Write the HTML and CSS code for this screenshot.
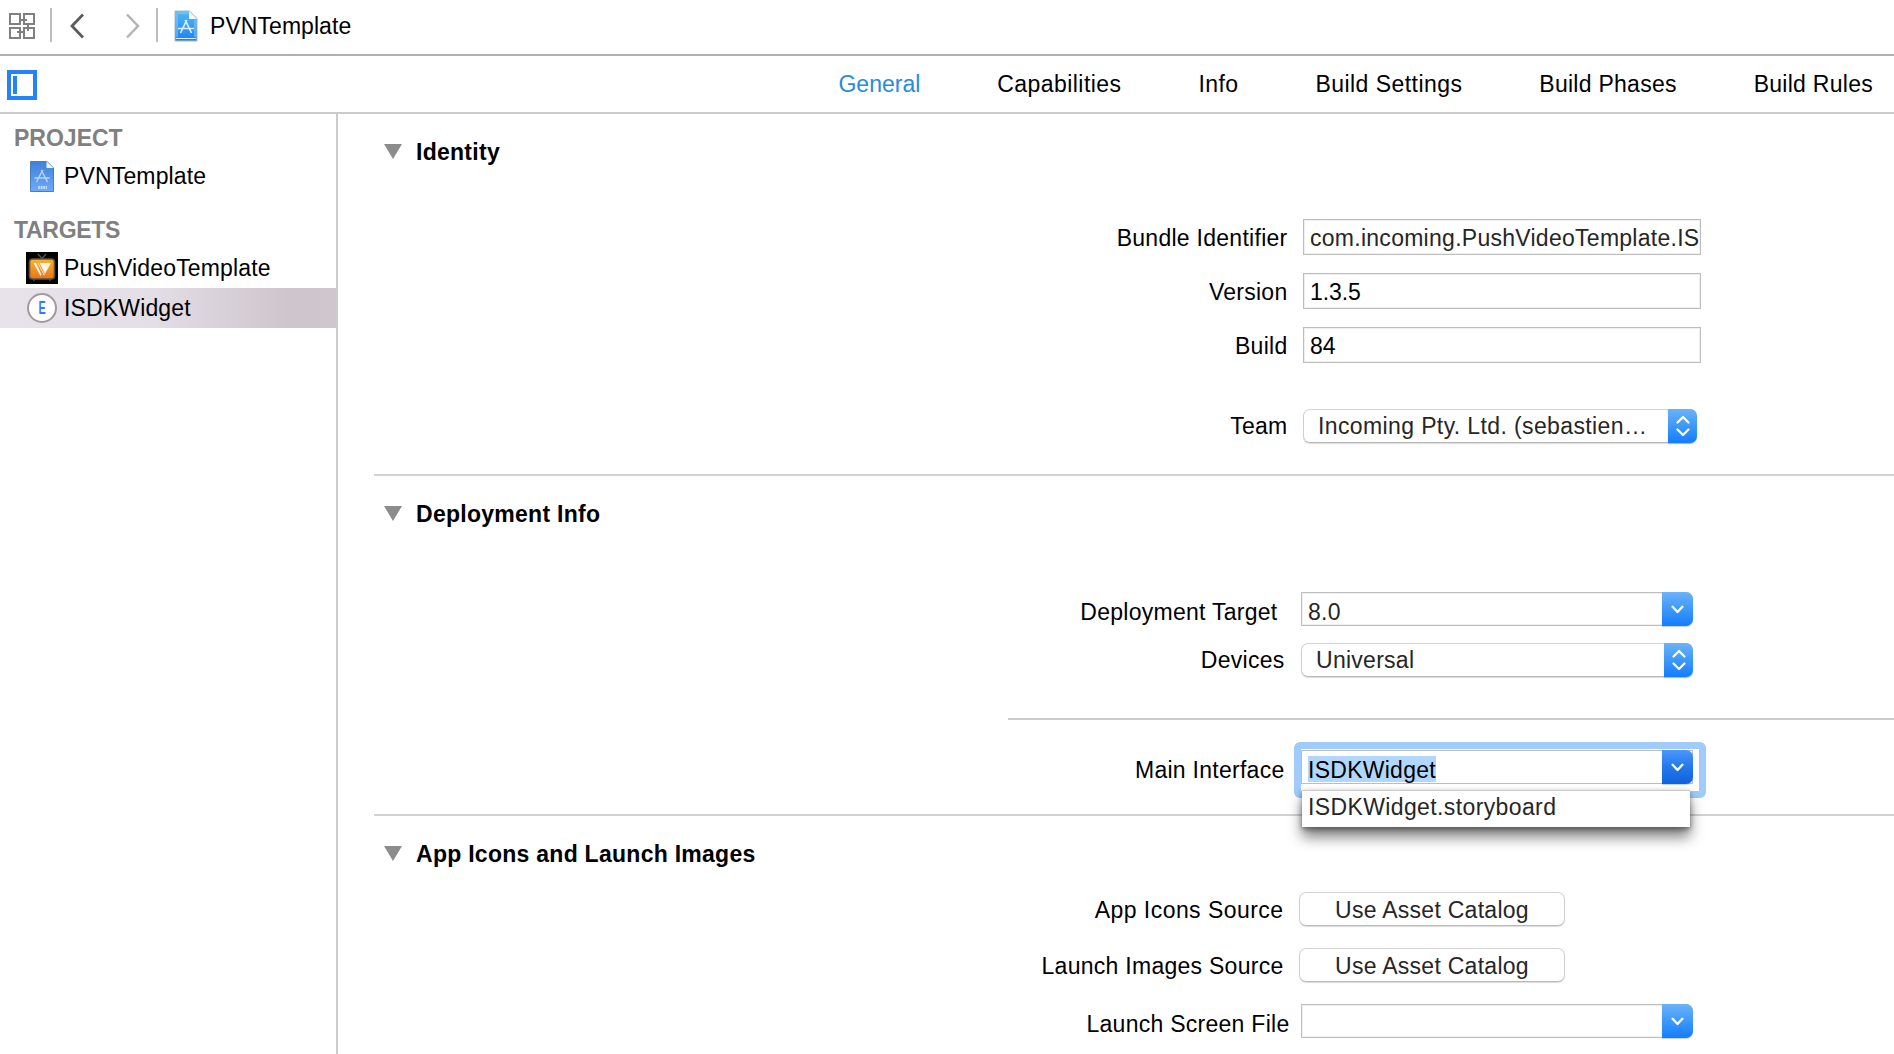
FILE: index.html
```html
<!DOCTYPE html>
<html lang="en">
<head>
<meta charset="utf-8">
<title>PVNTemplate</title>
<link rel="stylesheet" href="styles.css">
</head>
<body>
<svg width="0" height="0" class="defs">
  <defs>
    <linearGradient id="doc" x1="0" y1="0" x2="0" y2="1"><stop offset="0" stop-color="#54b8f4"/><stop offset="1" stop-color="#1c80f8"/></linearGradient>
    <linearGradient id="proj" x1="0" y1="0" x2="0" y2="1"><stop offset="0" stop-color="#3f80da"/><stop offset="1" stop-color="#70aaf8"/></linearGradient>
    <linearGradient id="tv" x1="0" y1="0" x2="0" y2="1"><stop offset="0" stop-color="#f9b52c"/><stop offset="1" stop-color="#e8741c"/></linearGradient>
    <symbol id="down" viewBox="0 0 12 8"><path d="M1.5 1.5 6 6.3 10.5 1.5" fill="none" stroke="#fff" stroke-width="2.2" stroke-linecap="round" stroke-linejoin="round"/></symbol>
    <symbol id="updown" viewBox="0 0 14 22"><path d="M1.5 7.5 7 2 12.500 7.500M1.500 14.500 7 20 12.500 14.500" fill="none" stroke="#fff" stroke-width="2.2" stroke-linecap="round" stroke-linejoin="round"/></symbol>
    <symbol id="tri" viewBox="0 0 18 15"><path d="M0 0H18L9 15Z" fill="#8c8c8c"/></symbol>
  </defs>
</svg>

<header class="toolbar">
  <svg class="related" width="26" height="26" viewBox="0 0 26 26" fill="none" stroke="#808080" stroke-width="2"><path d="M1 1H11V11H1ZM15 1H25V11H15ZM1 15H11V25H1ZM15 15H25V25H15ZM11 7H18M19 11V18M8 19H15"/></svg>
  <i class="rule"></i>
  <svg class="back" width="14" height="26" viewBox="0 0 14 26" fill="none" stroke="#5c5c5c" stroke-width="2.8"><path d="M13 1.500 2 13 13 24.500"/></svg>
  <svg class="forward" width="14" height="26" viewBox="0 0 14 26" fill="none" stroke="#b4b4b4" stroke-width="2.5"><path d="M1 1.500 12 13 1 24.500"/></svg>
  <i class="rule"></i>
  <svg class="file" width="24" height="32" viewBox="0 0 24 32"><path d="M1 1H15.500L23 8.500V31H1Z" fill="url(#doc)" stroke="#a9bccb"/><path d="M3 27V3H14.500M21 9.500V27" fill="none" stroke="#8accf7"/><path d="M2 28.500H22" stroke="#d8edff"/><path d="M15 1 23 9H15Z" fill="#f2f7fb"/><path d="M6.500 23 12.800 10M11.200 10 17.500 23M4 18.500H20" fill="none" stroke="#d9efff" stroke-width="1.700"/></svg>
  <span>PVNTemplate</span>
</header>

<nav class="tabs">
  <svg class="toggle" width="30" height="30" viewBox="0 0 30 30"><path d="M2 2H28V28H2Z" fill="none" stroke="#2383fa" stroke-width="4"/><path d="M6 6H10V24H6Z" fill="#2383fa"/></svg>
  <span class="active">General</span>
  <span class="loose">Capabilities</span>
  <span class="loose">Info</span>
  <span class="loose">Build Settings</span>
  <span>Build Phases</span>
  <span>Build Rules</span>
</nav>

<div class="body">
  <aside class="sidebar">
    <h2>PROJECT</h2>
    <div class="item">
      <svg class="project-icon" width="24" height="31" viewBox="0 0 24 31"><path d="M.5.5H17L23.500 7V30.500H.5Z" fill="url(#proj)" stroke="#4a7dbd"/><path d="M16.500.500V7H23.500Z" fill="#eef3f8"/><path d="M6.500 21 12.800 9M11.200 9 17.500 21M4.500 17H19.500" fill="none" stroke="#b5d5fa" stroke-width="1.500"/><path d="M8 26.500H17" stroke="#b9d8fc" stroke-width="3" stroke-dasharray="2 .600"/></svg>
      <span class="name">PVNTemplate</span>
    </div>
    <h2 class="targets">TARGETS</h2>
    <div class="item">
      <svg class="app-icon" width="32" height="32" viewBox="0 0 32 32"><path d="M0 0H32V32H0Z" fill="#000"/><path d="M12 2 16 6.500 20 2M8 27V29M24 27V29" fill="none" stroke="#555" stroke-width="1.400"/><rect x="3.500" y="7" width="25" height="20" rx="3" fill="url(#tv)" stroke="#5b5148" stroke-width="1.600"/><path d="M7.500 11H10L15.500 22.500 14.500 24ZM11.500 11H25L18 23.500Z" fill="#fff5e6"/><path d="M13 11 18.500 22" stroke="#e98c25" stroke-width="1"/></svg>
      <span class="name">PushVideoTemplate</span>
    </div>
    <div class="item selected">
      <b class="ext"><i>E</i></b>
      <span class="name">ISDKWidget</span>
    </div>
  </aside>

  <main>
    <section class="identity">
      <h3><svg width="18" height="15"><use href="#tri"/></svg>Identity</h3>
      <div class="row"><label>Bundle Identifier</label><div class="field"><span>com.incoming.PushVideoTemplate.IS</span></div></div>
      <div class="row"><label>Version</label><div class="field dark tight">1.3.5</div></div>
      <div class="row"><label>Build</label><div class="field dark tight">84</div></div>
      <div class="row team"><label>Team</label><div class="popup">Incoming Pty. Ltd. (sebastien…<i class="knob"><svg width="14" height="22"><use href="#updown"/></svg></i></div></div>
    </section>

    <section class="deployment">
      <h3><svg width="18" height="15"><use href="#tri"/></svg>Deployment Info</h3>
      <div class="row target"><label>Deployment Target</label><div class="combo">8.0<i class="knob"><svg width="13" height="9"><use href="#down"/></svg></i></div></div>
      <div class="row devices"><label>Devices</label><div class="popup">Universal<i class="knob"><svg width="14" height="22"><use href="#updown"/></svg></i></div></div>
      <hr>
      <div class="row interface">
        <label>Main Interface</label>
        <div class="combo focused"><mark>ISDKWidget</mark><i class="knob"><svg width="13" height="9"><use href="#down"/></svg></i>
          <div class="menu">ISDKWidget.storyboard</div>
        </div>
      </div>
    </section>

    <section class="icons">
      <h3><svg width="18" height="15"><use href="#tri"/></svg>App Icons and Launch Images</h3>
      <div class="row source"><label class="loose">App Icons Source</label><div class="button">Use Asset Catalog</div></div>
      <div class="row source"><label>Launch Images Source</label><div class="button">Use Asset Catalog</div></div>
      <div class="row screen"><label>Launch Screen File</label><div class="combo"><i class="knob"><svg width="13" height="9"><use href="#down"/></svg></i></div></div>
    </section>
  </main>
</div>
</body>
</html>
```
FILE: styles.css
```css
* { box-sizing: border-box; }

body {
  margin: 0;
  height: 1054px;
  overflow: hidden;
  display: flex;
  flex-direction: column;
  background: #fff;
  color: #000;
  font: 23px/24px "Liberation Sans", Arial, sans-serif;
  letter-spacing: 0.27px;
  white-space: nowrap;
}

svg { display: block; flex: none; }
.defs { position: absolute; }
.loose { letter-spacing: 0.45px; }

/* Jump bar */
.toolbar {
  flex: none;
  height: 56px;
  padding: 0 0 2px 9px;
  display: flex;
  align-items: center;
  border-bottom: 2px solid #b0b0b0;
  letter-spacing: 0.06px;
}
.toolbar .rule { width: 2px; height: 34px; background: #bdbdbd; margin-top: -2px; }
.related { margin-right: 15px; }
.back { margin: 0 42px 0 18px; }
.forward { margin-right: 16px; }
.file { margin: 0 12px 0 16px; }

/* Editor tabs */
.tabs {
  flex: none;
  height: 58px;
  padding: 0 21px 0 7px;
  display: flex;
  align-items: center;
  gap: 76.9px;
  border-bottom: 2px solid #ccc;
}
.toggle { margin: 2px auto 0 0; }
.active { color: #2a8ade; letter-spacing: 0; }

.body { flex: 1; min-height: 0; display: flex; }

/* Project and target list */
.sidebar {
  flex: none;
  width: 338px;
  padding-top: 12px;
  border-right: 2px solid #ccc;
}
.sidebar h2 {
  margin: 0;
  padding-left: 14px;
  font-size: 23px;
  line-height: 24px;
  letter-spacing: 0;
  color: #808080;
}
.sidebar .targets { margin: 16px 0 6px; letter-spacing: -0.3px; }
.item {
  height: 40px;
  padding-left: 26px;
  display: flex;
  align-items: center;
}
.name { margin-left: 6px; letter-spacing: 0.15px; }
.project-icon { margin: 0 4px; }
.sidebar h2:first-child + .item { height: 52px; }
.selected { background: linear-gradient(90deg, #e8e3ea 0, #e4dee6 45%, #cfc5cd 85%, #cfc7cd 100%); }
.ext {
  width: 30px;
  height: 30px;
  margin: 0 1px;
  border: 2px solid #a09aa1;
  border-radius: 50%;
  background: #fff;
  color: #3478f6;
  font-size: 18px;
  line-height: 27px;
  letter-spacing: 0;
  text-align: center;
}
.ext i { display: block; font-style: normal; transform: scaleX(0.6); }

/* Settings sections */
main { flex: 1; min-width: 0; padding-left: 36px; }
section { border-bottom: 2px solid #d2d2d2; }
h3 {
  margin: 0;
  padding-left: 10px;
  height: 24px;
  display: flex;
  align-items: center;
  gap: 14px;
  font-size: 23px;
}
h3 svg { margin-top: -1px; }
.row { display: flex; align-items: center; }
.row label { width: 915px; flex: none; padding-right: 1.5px; text-align: right; }

.identity { height: 362px; padding-top: 26px; }
.identity .row { height: 36px; margin-top: 18px; gap: 14px; }
.identity .row label { padding-top: 2px; }
.identity h3 + .row { margin-top: 55px; }
.identity .team { height: 34px; margin-top: 46px; }
.identity .team label { padding-top: 0; }

.deployment { height: 340px; padding-top: 26px; }
.deployment .row { height: 34px; }
.deployment .target { margin-top: 66px; gap: 22px; }
.row.target label { width: 905px; padding-top: 6px; }
.deployment .devices { margin-top: 17px; gap: 15px; }
.row.devices label, .row.interface label { width: 912px; }
hr { height: 2px; margin: 41px 0 0 634px; border: 0; background: #ccc; }
.deployment .interface { margin-top: 30px; gap: 15px; }
.row.interface label { padding-top: 6px; }

.icons { padding-top: 26px; border: 0; }
.icons .source { height: 34px; margin-top: 22px; gap: 14px; }
.row.source label { width: 911px; padding-top: 2px; }
.icons h3 + .source { margin-top: 26px; }
.icons .screen { height: 34px; margin-top: 22px; gap: 10px; }
.row.screen label { width: 917px; padding-top: 6px; }

/* Controls */
.field {
  width: 398px;
  height: 36px;
  padding: 6px 1px 0 6px;
  border: 1px solid #bdbdbd;
  box-shadow: inset 0 0 0 1px #f0f0f0;
  color: #262626;
}
.field span { display: block; height: 28px; overflow: hidden; }
.field.dark { color: #000; }
.tight { letter-spacing: -0.1px; }

.popup, .combo {
  position: relative;
  height: 34px;
  width: 392px;
  border: 1px solid #bdbdbd;
  color: #262626;
}
.popup {
  padding: 4px 0 0 14px;
  border-color: #d3d3d3 #cfcfcf #b9b9b9;
  border-radius: 7px;
  box-shadow: 0 1px 1px rgba(0, 0, 0, 0.14);
}
.team .popup { width: 394px; letter-spacing: 0.38px; }
.combo {
  padding: 7px 0 0 6px;
  border-radius: 0 7px 7px 0;
  box-shadow: inset 0 0 0 1px #f0f0f0;
}
.knob {
  position: absolute;
  top: -1px;
  right: -1px;
  width: 29px;
  height: 34px;
  display: flex;
  align-items: center;
  justify-content: center;
  border-radius: 0 7px 7px 0;
  background: linear-gradient(#6bb2fa, #3d99fb 50%, #147cfe);
  box-shadow: 0 1px 1px rgba(0, 60, 160, 0.25);
}
.combo .knob { width: 31px; }

.focused {
  color: #000;
  border-radius: 0;
  box-shadow: none;
}
.focused::before {
  content: "";
  position: absolute;
  z-index: -1;
  inset: -9px -14px -15px -8px;
  border: 7px solid #a0cbfa;
  border-radius: 6px;
}
.focused .knob { background: linear-gradient(#4b98fb, #2478ec 50%, #0f62dc); }
mark {
  display: block;
  width: 128px;
  height: 26px;
  margin-top: -2px;
  padding-top: 2px;
  background: #b2d7fe;
  color: #000;
}
.menu {
  position: absolute;
  top: 39px;
  left: 0;
  width: 388px;
  height: 37px;
  padding: 4px 0 0 6px;
  letter-spacing: 0.38px;
  background: #fff;
  color: #262626;
  border-top: 1px solid #ccc;
  box-shadow: 0 10px 14px rgba(0, 0, 0, 0.5), 0 2px 5px rgba(0, 0, 0, 0.4);
}

.button {
  width: 266px;
  height: 34px;
  padding-top: 5px;
  text-align: center;
  color: #262626;
  border: 1px solid;
  border-color: #d3d3d3 #cfcfcf #b9b9b9;
  border-radius: 7px;
  box-shadow: 0 1px 1px rgba(0, 0, 0, 0.14);
}
```
